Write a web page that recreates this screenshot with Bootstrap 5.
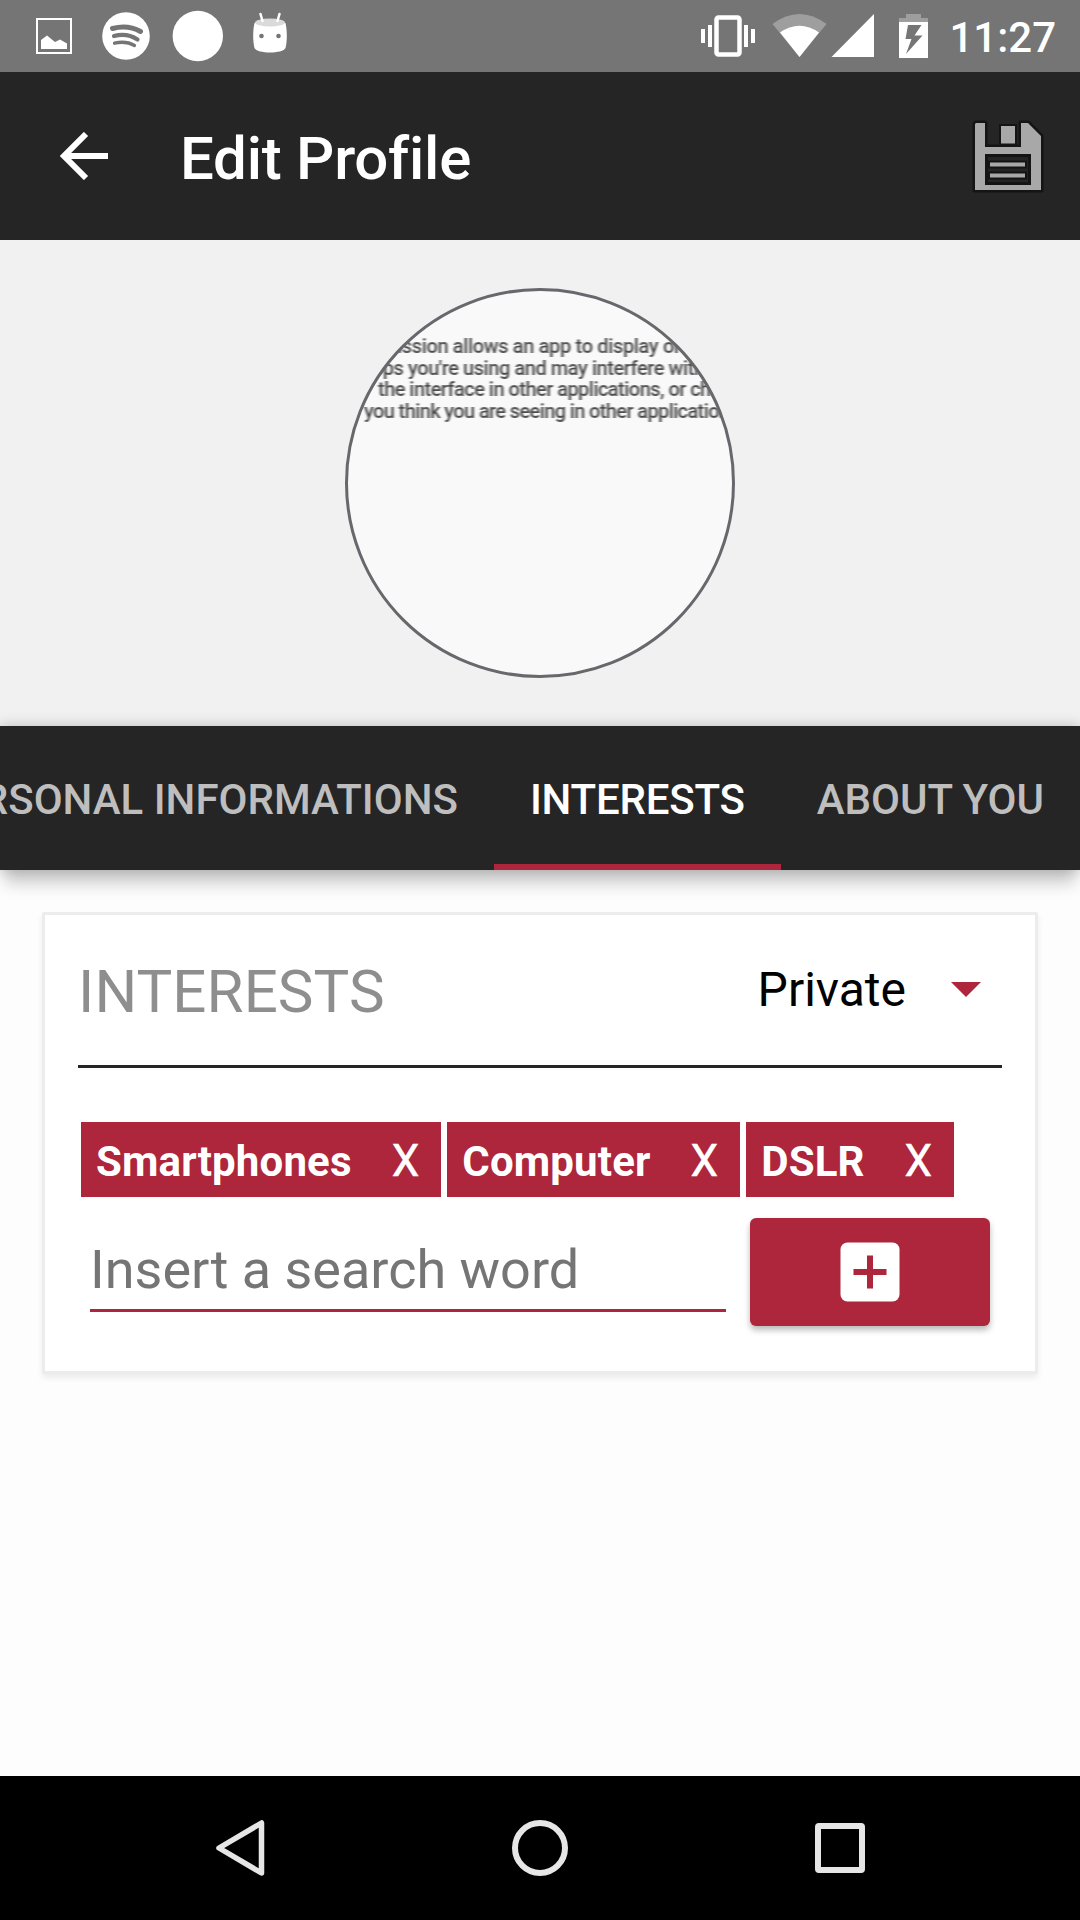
<!DOCTYPE html>
<html lang="en">
<head>
<meta charset="utf-8">
<meta name="viewport" content="width=device-width, initial-scale=1">
<title>Edit Profile</title>
<link rel="stylesheet" href="https://cdn.jsdelivr.net/npm/bootstrap@5.3.0/dist/css/bootstrap.min.css">
<style>
  :root { --brand: #ad263b; --ink: #252525; }
  body { font-family: Roboto, "Liberation Sans", sans-serif; background: #fdfdfd; line-height: 1; }
  svg { display: block; flex: none; }
  .screen { width: 1080px; height: 1920px; overflow: hidden; }
  .status-bar { height: 72px; background: #757575; }
  .clock { font-size: 42px; font-weight: 500; line-height: 72px; padding: 2px 0 0 19px; }
  .app-bar { height: 168px; background: var(--ink); padding-left: 60px; padding-right: 34px; }
  .app-title { font-size: 60px; font-weight: 500; line-height: 70px; letter-spacing: -.25px; font-variant-ligatures: common-ligatures; padding-left: 72px; padding-top: 5px; }
  .save-icon { margin-top: 2px; }
  .hero { height: 486px; background: #f1f1f1; padding-top: 48px; }
  .tab-strip { height: 144px; background: var(--ink); position: relative; box-shadow: 0 19px 15px -5px rgba(0,0,0,.18), 0 0 13px rgba(0,0,0,.22); }
  .tab-strip .nav-link { height: 144px; padding: 3px 36px 0; font-size: 42px; font-weight: 500; line-height: 141px; color: #bebebe; border: 0; border-radius: 0; white-space: nowrap; }
  .tab-strip .nav-link.active { color: #fff; letter-spacing: -.22px; box-shadow: inset 0 -6px var(--brand); }
  .panel { margin: 42px 42px 0; height: 462px; border: 3px solid #ececec; border-radius: 2px; padding: 0 33px; background: #fff; box-shadow: 0 4px 6px rgba(0,0,0,.07); }
  .panel-head { height: 153px; border-bottom: 3px solid var(--ink); padding-right: 21px; }
  .panel-title { font-size: 60px; line-height: 70px; letter-spacing: .1px; color: #8e8e8e; font-weight: 400; padding-top: 4px; }
  .visibility { font-size: 48px; line-height: 56px; color: #000; gap: 45px; }
  .visibility svg { margin-bottom: 2px; }
  .tags { padding: 54px 0 0 3px; gap: 6px; }
  .tag { height: 75px; background: var(--brand); color: #fff; font-size: 42px; font-weight: 700; line-height: 75px; letter-spacing: .15px; padding: 2px 22.7px 0 15px; gap: 40px; }
  .tag .remove { font-size: 44px; font-weight: 400; width: 27px; letter-spacing: 0; -webkit-text-stroke: .5px #fff; }
  .entry { padding: 21px 12px 0; gap: 24px; }
  .search-word { height: 94px; width: 636px; border: 0; border-bottom: 3px solid var(--brand); border-radius: 0; background: none; padding: 11px 0 0 0; font-size: 54px; }
  .search-word::placeholder { color: #757575; opacity: 1; }
  .add { width: 240px; height: 108px; background: var(--brand); border: 0; border-radius: 6px; box-shadow: 0 4px 6px rgba(0,0,0,.28); padding: 0; }
  .soft-keys { height: 144px; background: #000; padding: 0 215px; }
</style>
<script src="https://cdn.jsdelivr.net/npm/bootstrap@5.3.0/dist/js/bootstrap.bundle.min.js"></script>
</head>
<body>
<div class="screen d-flex flex-column">
  <div class="status-bar d-flex text-white">
    <svg width="300" height="72" fill="#fff">
      <rect x="37" y="19" width="34" height="34" fill="none" stroke="#fff" stroke-width="2"/>
      <path d="M41 49V40L47 35.500L55 42L60 39.500L67 43.500V49Z"/>
      <circle cx="126" cy="36" r="23.800"/>
      <g fill="none" stroke="#757575" stroke-linecap="round">
        <path d="M112.500 28.500Q128 24.500 140.500 31.500" stroke-width="5"/>
        <path d="M114 36Q127 32.500 137.500 39.500" stroke-width="4.200"/>
        <path d="M114.500 43.200Q126 40.500 134.500 45.500" stroke-width="3.300"/>
      </g>
      <circle cx="197.800" cy="36" r="25.200"/>
      <path d="M254.500 23C252.500 32 253 42 254.500 48C257 54 283 54 285.500 48C287 42 287.500 32 285.500 23Z"/>
      <ellipse cx="270" cy="22.500" rx="15" ry="4" fill="#dadada"/>
      <path d="M260.500 14L262.500 21M279.500 14L277.500 21" stroke="#fff" stroke-width="2.500" stroke-linecap="round"/>
      <circle cx="261.500" cy="36" r="2.300" fill="#757575"/><circle cx="278.500" cy="36" r="2.300" fill="#757575"/>
    </svg>
    <svg class="ms-auto" width="230" height="72" viewBox="700 0 230 72" fill="#fff">
      <path d="M701 29h4v14h-4zM708 25h4v22h-4zM744 25h4v22h-4zM751 29h4v14h-4z"/>
      <rect x="716.500" y="17.500" width="23" height="37" rx="2" fill="none" stroke="#fff" stroke-width="4.500"/>
      <path d="M772.500 24Q799.500 4 826.500 24L799.500 57Z" opacity=".3"/>
      <path d="M780 32.500Q799.500 19 819 32.500L799.500 57Z"/>
      <path d="M874 14V57H831.500Z"/>
      <path d="M899 22V18H906V14H921V18H928V22Z" opacity=".3"/>
      <path fill-rule="evenodd" d="M899 22H928V58H899ZM908 25L905.500 39H911.500L906 54L922.500 35.500H914.500L921.500 25Z"/>
    </svg>
    <div class="clock pe-4">11:27</div>
  </div>

  <header class="app-bar d-flex align-items-center text-white">
    <svg width="48" height="48" fill="none" stroke="#fff" stroke-width="6"><path d="M48 24H5M26 2L4 24L26 46"/></svg>
    <h1 class="app-title m-0">Edit Profile</h1>
    <svg class="save-icon ms-auto" width="74" height="76" viewBox="972 119 74 76">
      <path fill="#a8a8a8" stroke="#141414" stroke-width="5" stroke-linejoin="round" paint-order="stroke" fill-rule="evenodd" d="M976 123H985V147H1021V123H1028L1041 136V190H975V124ZM985 154V185H1031V154Z"/>
      <path fill="none" stroke="#141414" stroke-width="3" d="M986.500 155.500H1029.500V183.500H986.500Z"/>
      <g fill="#a8a8a8" stroke="#141414" stroke-width="4" paint-order="stroke"><path d="M1001 126H1015V143.500H1001ZM990 162.500H1025V166.500H990ZM990 173.500H1025V177.500H990Z"/></g>
    </svg>
  </header>

  <section class="hero d-flex justify-content-center">
    <svg width="390" height="390" viewBox="345 288 390 390">
      <defs>
        <clipPath id="disc"><circle cx="540" cy="483" r="193"/></clipPath>
        <filter id="lowres"><feGaussianBlur stdDeviation=".9 .6"/></filter>
      </defs>
      <circle cx="540" cy="483" r="193" fill="#f9f9f9"/>
      <g clip-path="url(#disc)" font-size="20" font-weight="500" fill="#4c4c4c">
        <g filter="url(#lowres)">
          <text x="397" y="353" textLength="284">ission allows an app to display or</text>
          <text x="372" y="374.500" textLength="333">pps you're using and may interfere with</text>
          <text x="378" y="395.500" textLength="350">the interface in other applications, or char</text>
          <text x="364" y="418" textLength="366">you think you are seeing in other application</text>
        </g>
      </g>
      <circle cx="540" cy="483" r="193.500" fill="none" stroke="#68676c" stroke-width="3"/>
    </svg>
  </section>

  <nav class="tab-strip nav flex-nowrap justify-content-end">
    <a class="nav-link" href="#">PERSONAL INFORMATIONS</a>
    <a class="nav-link active" href="#">INTERESTS</a>
    <a class="nav-link" href="#">ABOUT YOU</a>
  </nav>

  <main class="flex-grow-1">
    <div class="panel">
      <div class="panel-head d-flex align-items-center justify-content-between">
        <h2 class="panel-title m-0">INTERESTS</h2>
        <div class="visibility d-flex align-items-center">Private
          <svg width="30" height="15" fill="#ad263b"><path d="M0 0H30L15 15Z"/></svg>
        </div>
      </div>
      <div class="tags d-flex">
        <span class="tag d-flex">Smartphones<span class="remove">X</span></span>
        <span class="tag d-flex">Computer<span class="remove">X</span></span>
        <span class="tag d-flex">DSLR<span class="remove">X</span></span>
      </div>
      <div class="entry d-flex">
        <input class="search-word" type="text" placeholder="Insert a search word">
        <button class="add d-flex align-items-center justify-content-center" type="button" aria-label="Add">
          <svg width="60" height="60"><rect x=".5" y=".5" width="59" height="59" rx="7" fill="#fff"/><path d="M30 13.500V46.500M13.500 30H46.500" stroke="#ad263b" stroke-width="6"/></svg>
        </button>
      </div>
    </div>
  </main>

  <footer class="soft-keys d-flex align-items-center justify-content-between">
    <svg width="50" height="58" fill="none" stroke="#e6e6e6" stroke-width="5.500" stroke-linejoin="round"><path d="M46.500 4V54L4 29Z"/></svg>
    <svg width="58" height="58"><circle cx="29" cy="29" r="25" fill="none" stroke="#e6e6e6" stroke-width="6"/></svg>
    <svg width="50" height="50"><rect x="3" y="3" width="44" height="44" rx="1" fill="none" stroke="#e6e6e6" stroke-width="6"/></svg>
  </footer>
</div>
</body>
</html>
